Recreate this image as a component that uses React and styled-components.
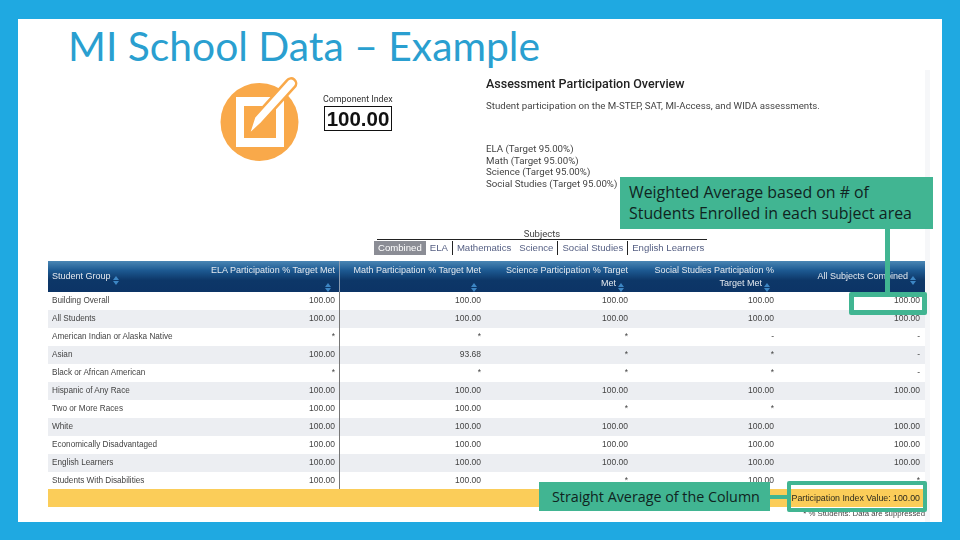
import React from "react";
import styled, { createGlobalStyle } from "styled-components";

const GlobalStyle = createGlobalStyle`
  html, body {
    margin: 0;
    padding: 0;
    width: 960px;
    height: 540px;
    overflow: hidden;
    background: #1fa9e1;
  }
  * {
    box-sizing: border-box;
  }
`;

const Slide = styled.div`
  width: 960px;
  height: 540px;
  padding: 19px 18px 18px 18px;
  background: #1fa9e1;
`;

const Panel = styled.div`
  position: relative;
  width: 924px;
  height: 503px;
  background: #fff;
  overflow: hidden;
`;

const Title = styled.h1`
  margin: 0;
  padding: 0 0 0 50px;
  height: 51px;
  font-family: Lato, sans-serif;
  font-size: 40.8px;
  font-weight: 400;
  line-height: 54px;
  color: #2a9fd0;
  white-space: nowrap;
`;

const Shot = styled.div`
  margin-left: 30px;
  width: 882px;
  height: 452px;
  background: linear-gradient(to right, #fff 877px, #f6f7f9 877px);
  font-family: Roboto, "Liberation Sans", sans-serif;
  color: #444;
  filter: blur(0.35px);
`;

const Overview = styled.div`
  display: flex;
  height: 158px;
`;

const IconSlot = styled.div`
  width: 252px;
  padding: 6px 0 0 172px;
  flex: none;
`;

const Badge = styled.div`
  width: 186px;
  flex: none;
  padding: 23px 0 0 23px;
`;

const BadgeLabel = styled.div`
  font-size: 8.9px;
  line-height: 13px;
  white-space: nowrap;
  color: #333;
`;

const BadgeValue = styled.div`
  margin-left: 1px;
  width: 68px;
  height: 25px;
  border: 1px solid #111;
  font-family: "Liberation Sans", sans-serif;
  font-size: 20.5px;
  font-weight: 700;
  line-height: 23px;
  text-align: center;
  color: #111;
`;

const Summary = styled.div`
  padding-top: 6px;
`;

const SummaryTitle = styled.div`
  font-size: 12.5px;
  font-weight: 500;
  line-height: 15px;
  color: #222;
`;

const SummaryText = styled.div`
  margin-top: 8px;
  font-size: 9.7px;
  line-height: 14px;
  white-space: nowrap;
`;

const TargetList = styled.div`
  margin-top: 30px;
  font-size: 9.7px;
  line-height: 11.7px;
  white-space: nowrap;
`;

const SubjectBlock = styled.div`
  margin-left: 326px;
  width: 340px;
`;

const SubjectLabel = styled.div`
  margin: 0 3px;
  width: 330px;
  font-size: 9.5px;
  line-height: 11px;
  text-align: center;
  border-bottom: 1px solid #222;
`;

const Tabs = styled.div`
  display: flex;
  align-items: center;
  height: 14px;
  margin-top: 1px;
  font-family: "Liberation Sans", sans-serif;
  font-size: 9.6px;
  white-space: nowrap;
`;

const Tab = styled.span`
  padding: 0 4px;
  line-height: 14px;
  color: ${(p) => (p.$active ? "#fff" : "#566084")};
  background: ${(p) => (p.$active ? "#8b8d95" : "transparent")};
  border-right: ${(p) => (p.$divide ? "1px solid #222" : "none")};
`;

const Table = styled.div`
  margin-top: 6px;
  width: 877px;
  font-family: "Liberation Sans", sans-serif;
  font-size: 8.5px;
`;

const gridColumns = "150px 142px 145px 147px 146px 147px";

const HeaderRow = styled.div`
  display: grid;
  grid-template-columns: ${gridColumns};
  height: 31px;
  background: linear-gradient(#4a86b4 0%, #1d5a92 30%, #0d3768 62%, #0c3466 100%);
  color: #e4e9ef;
  font-size: 9px;
`;

const HeaderCell = styled.div`
  display: flex;
  align-items: center;
  justify-content: ${(p) => (p.$left ? "flex-start" : "flex-end")};
  padding: 2px ${(p) => (p.$last ? "5px" : "4px")} 0 4px;
  text-align: ${(p) => (p.$left ? "left" : "right")};
  line-height: 13px;
  border-right: ${(p) => (p.$divide ? "1px solid #8b9bb0" : "none")};
`;

const Sort = styled.span`
  display: inline-flex;
  flex-direction: column;
  gap: 1px;
  margin: 0 4px 0 2px;
  vertical-align: -1px;
  &::before,
  &::after {
    content: "";
    border-left: 3px solid transparent;
    border-right: 3px solid transparent;
  }
  &::before {
    border-bottom: 4px solid #3d86c4;
  }
  &::after {
    border-top: 4px solid #3d86c4;
  }
`;

const Row = styled.div`
  display: grid;
  grid-template-columns: ${gridColumns};
  height: 18px;
  background: ${(p) => (p.$odd ? "#eceef2" : "#fff")};
`;

const Cell = styled.div`
  padding: 0 ${(p) => (p.$last ? "5px" : "4px")} 0 4px;
  font-size: ${(p) => (p.$left ? "8.2px" : "8.5px")};
  line-height: 17px;
  text-align: ${(p) => (p.$left ? "left" : "right")};
  white-space: nowrap;
  border-right: ${(p) => (p.$divide ? "1px solid #777" : "none")};
`;

const IndexRow = styled.div`
  position: relative;
  height: 18px;
  margin-top: -1px;
  padding-right: 5px;
  background: #fbcd59;
  color: #2c2a1e;
  font-size: 8.8px;
  line-height: 18px;
  text-align: right;
`;

const Footnote = styled.div`
  font-size: 7.8px;
  line-height: 13px;
  text-align: right;
`;

const Callout = styled.div`
  position: absolute;
  left: ${(p) => p.$x}px;
  top: ${(p) => p.$y}px;
  width: ${(p) => p.$w}px;
  height: ${(p) => p.$h}px;
  padding: ${(p) => p.$pad};
  background: #41b592;
  color: #10241f;
  font-family: "Open Sans", sans-serif;
  font-size: ${(p) => p.$size}px;
  line-height: 21px;
  white-space: nowrap;
`;

const Connector = styled.div`
  position: absolute;
  left: ${(p) => p.$x}px;
  top: ${(p) => p.$y}px;
  width: ${(p) => p.$w}px;
  height: ${(p) => p.$h}px;
  background: #41b592;
`;

const Outline = styled.div`
  position: absolute;
  left: ${(p) => p.$x}px;
  top: ${(p) => p.$y}px;
  width: ${(p) => p.$w}px;
  height: ${(p) => p.$h}px;
  border: ${(p) => p.$border}px solid #41b592;
  border-radius: 2px;
`;

const TaskIcon = () => (
  <svg width="80" height="90" viewBox="0 0 80 90" style={{ display: "block" }}>
    <circle cx="39.5" cy="46" r="39" fill="#f9a94a" />
    <path d="M16 21h48v50H16z" fill="#fff" />
    <path d="M24 30h32v32H24z" fill="#f9a94a" />
    <path
      d="M28 60L34.2 40.8L67 4.3A5 5 0 0 1 75 10.7L41.8 47.2Z"
      fill="#fff"
      stroke="#f9a94a"
      strokeWidth="2.5"
      strokeLinejoin="round"
    />
  </svg>
);

const subjects = [
  { label: "Combined", active: true },
  { label: "ELA", divide: true },
  { label: "Mathematics" },
  { label: "Science", divide: true },
  { label: "Social Studies", divide: true },
  { label: "English Learners" },
];

const headers = [
  { title: "ELA Participation % Target Met", divide: true },
  { title: "Math Participation % Target Met" },
  { title: "Science Participation % Target Met" },
  { title: "Social Studies Participation % Target Met" },
  { title: "All Subjects Combined", last: true },
];

const full = ["100.00", "100.00", "100.00", "100.00", "100.00"];

const rows = [
  ["Building Overall", ...full],
  ["All Students", ...full],
  ["American Indian or Alaska Native", "*", "*", "*", "-", "-"],
  ["Asian", "100.00", "93.68", "*", "*", "-"],
  ["Black or African American", "*", "*", "*", "*", "-"],
  ["Hispanic of Any Race", ...full],
  ["Two or More Races", "100.00", "100.00", "*", "*", ""],
  ["White", ...full],
  ["Economically Disadvantaged", ...full],
  ["English Learners", ...full],
  ["Students With Disabilities", "100.00", "100.00", "*", "100.00", "*"],
];

export default function App() {
  return (
    <>
      <GlobalStyle />
      <Slide>
        <Panel>
          <Title>MI School Data – Example</Title>
          <Shot>
            <Overview>
              <IconSlot>
                <TaskIcon />
              </IconSlot>
              <Badge>
                <BadgeLabel>Component Index</BadgeLabel>
                <BadgeValue>100.00</BadgeValue>
              </Badge>
              <Summary>
                <SummaryTitle>Assessment Participation Overview</SummaryTitle>
                <SummaryText>
                  Student participation on the M-STEP, SAT, MI-Access, and WIDA
                  assessments.
                </SummaryText>
                <TargetList>
                  <div>ELA (Target 95.00%)</div>
                  <div>Math (Target 95.00%)</div>
                  <div>Science (Target 95.00%)</div>
                  <div>Social Studies (Target 95.00%)</div>
                </TargetList>
              </Summary>
            </Overview>
            <SubjectBlock>
              <SubjectLabel>Subjects</SubjectLabel>
              <Tabs>
                {subjects.map((s) => (
                  <Tab key={s.label} $active={s.active} $divide={s.divide}>
                    {s.label}
                  </Tab>
                ))}
              </Tabs>
            </SubjectBlock>
            <Table>
              <HeaderRow>
                <HeaderCell $left>
                  <span>
                    Student Group
                    <Sort />
                  </span>
                </HeaderCell>
                {headers.map((h) => (
                  <HeaderCell key={h.title} $divide={h.divide} $last={h.last}>
                    <span>
                      {h.title}
                      <Sort />
                    </span>
                  </HeaderCell>
                ))}
              </HeaderRow>
              {rows.map((row, i) => (
                <Row key={row[0]} $odd={i % 2 === 1}>
                  {row.map((value, c) => (
                    <Cell
                      key={c}
                      $left={c === 0}
                      $divide={c === 1}
                      $last={c === 5}
                    >
                      {value}
                    </Cell>
                  ))}
                </Row>
              ))}
              <IndexRow>Participation Index Value: 100.00</IndexRow>
              <Footnote>* % Students: Data are suppressed</Footnote>
            </Table>
          </Shot>
          <Callout $x={602} $y={158} $w={313} $h={52} $pad="5px 0 0 9px" $size={15.9}>
            Weighted Average based on # of
            <br />
            Students Enrolled in each subject area
          </Callout>
          <Connector $x={867} $y={210} $w={5} $h={64} />
          <Outline $x={831} $y={273} $w={78} $h={23} $border={5} />
          <Callout $x={521} $y={463} $w={231} $h={29} $pad="4px 0 0 13px" $size={14.3}>
            Straight Average of the Column
          </Callout>
          <Connector $x={752} $y={476} $w={18} $h={4} />
          <Outline $x={769} $y={462} $w={140} $h={31} $border={4} />
        </Panel>
      </Slide>
    </>
  );
}
